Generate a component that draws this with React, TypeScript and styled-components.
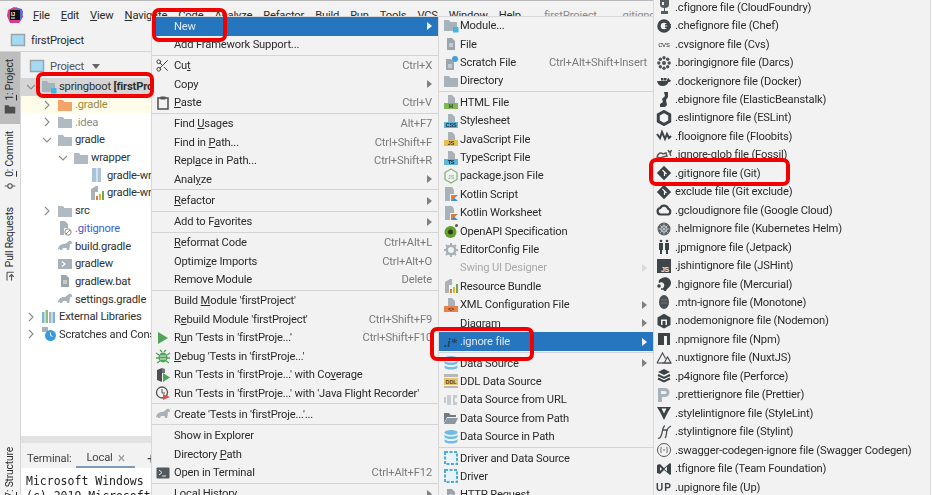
import React from "react";
import styled, { createGlobalStyle } from "styled-components";
import { Scissors } from "lucide-react";

const Global = createGlobalStyle`
  html, body { margin: 0; padding: 0; background: #fff; }
  #root { width: 933px; height: 495px; }
`;

const UI = `Roboto, "Noto Sans", sans-serif`;

const Root = styled.div`
  position: relative;
  width: 933px;
  height: 495px;
  overflow: hidden;
  background: #fff;
  font-family: ${UI};
  font-size: 11.2px;
  letter-spacing: -0.18px;
  color: #2b2b2b;
`;
const Frame = styled.div`
  position: relative;
  width: 930px;
  height: 495px;
  display: flex;
  flex-direction: column;
  background: #f2f2f2;
  border-top: 1px solid #b9b9b9;
  box-sizing: border-box;
  filter: blur(0.4px);
`;
const MenuBar = styled.div`
  height: 28px;
  flex: none;
  display: flex;
  align-items: center;
  padding-left: 7px;
  gap: 11px;
  white-space: nowrap;
`;
const BarItem = styled.span<{ $dim?: boolean }>`
  color: ${(p) => (p.$dim ? "#8a8a8a" : "#2b2b2b")};
  margin-left: ${(p) => (p.$dim ? "12px" : "0")};
`;
const NavBar = styled.div`
  height: 22px;
  flex: none;
  display: flex;
  align-items: center;
  gap: 5px;
  padding-left: 10px;
  border-bottom: 1px solid #d4d4d4;
`;
const Body = styled.div`
  flex: 1;
  min-height: 0;
  display: flex;
`;
const Stripe = styled.div`
  width: 20px;
  flex: none;
  display: flex;
  flex-direction: column;
  background: #f2f2f2;
  border-right: 1px solid #d4d4d4;
`;
const StripeTab = styled.div<{ $h: number; $on?: boolean }>`
  height: ${(p) => p.$h}px;
  flex: none;
  display: flex;
  flex-direction: column;
  align-items: center;
  justify-content: flex-start;
  gap: 3px;
  padding-top: 7px;
  box-sizing: border-box;
  background: ${(p) => (p.$on ? "#bdbdbd" : "transparent")};
  svg {
    width: 12px;
    height: 12px;
  }
`;
const StripeLabel = styled.span`
  writing-mode: vertical-rl;
  transform: rotate(180deg);
  font-size: 10.3px;
  line-height: 14px;
  white-space: nowrap;
`;
const StripeSpacer = styled.div`
  flex: 1;
`;
const Panel = styled.div`
  flex: 1;
  min-width: 0;
  display: flex;
  flex-direction: column;
`;
const PanelHead = styled.div`
  height: 26px;
  flex: none;
  display: flex;
  align-items: center;
  gap: 5px;
  padding: 2px 0 0 8px;
  box-sizing: border-box;
  color: #555;
`;
const Tree = styled.div`
  flex: 1;
  min-height: 0;
  background: #fff;
`;
const TreeRow = styled.div<{ $level: number; $tone?: string }>`
  height: 17.7px;
  display: flex;
  align-items: center;
  gap: 2px;
  padding-left: ${(p) => 4 + p.$level * 16}px;
  white-space: nowrap;
  background: ${(p) =>
    p.$tone === "sel" ? "#d5d5d5" : p.$tone === "ex" ? "#fffde9" : "transparent"};
`;
const ChevronSlot = styled.span`
  width: 12px;
  height: 12px;
  flex: none;
  margin-right: 2px;
`;
const TreeLabel = styled.span<{ $c?: string }>`
  color: ${(p) => p.$c || "#2f2f2f"};
`;
const Strong = styled.b`
  font-weight: 700;
`;
const HScroll = styled.div`
  height: 7px;
  flex: none;
  background: #e2e2e2;
`;
const TermHead = styled.div`
  height: 25px;
  flex: none;
  display: flex;
  align-items: stretch;
  padding-left: 6px;
  color: #444;
`;
const TermCell = styled.span`
  display: flex;
  align-items: center;
  padding-top: 6px;
`;
const TermTab = styled.div`
  margin-left: 5px;
  padding: 6px 10px 0;
  box-sizing: border-box;
  display: flex;
  align-items: center;
  gap: 5px;
  border-bottom: 2px solid #7f9ab8;
`;
const TermClose = styled.span`
  color: #9a9a9a;
  font-size: 14px;
`;
const TermPlus = styled(TermCell)`
  font-size: 15px;
  margin-left: 12px;
`;
const TermBody = styled.div`
  flex: none;
  height: 27px;
  background: #fff;
  padding: 6px 0 0 5px;
  box-sizing: border-box;
  font-family: "DejaVu Sans Mono", monospace;
  font-size: 11.5px;
  letter-spacing: 0;
  line-height: 15px;
  color: #222;
  white-space: nowrap;
`;
const Menu = styled.div<{ $x: number; $y: number; $w: number }>`
  position: absolute;
  left: ${(p) => p.$x}px;
  top: ${(p) => p.$y}px;
  width: ${(p) => p.$w}px;
  background: #f2f2f2;
  box-shadow: 0 0 0 1px #d8d8d8;
  white-space: nowrap;
`;
const Row = styled.div<{ $h: number; $on?: boolean; $off?: boolean; $ix: number }>`
  height: ${(p) => p.$h}px;
  display: flex;
  align-items: center;
  position: relative;
  padding-left: ${(p) => p.$ix}px;
  padding-right: 7px;
  background: ${(p) => (p.$on ? "#2675bf" : "transparent")};
  color: ${(p) => (p.$on ? "#dfeaf5" : p.$off ? "#a9a9a9" : "#2b2b2b")};
`;
const IconSlot = styled.span<{ $w: number }>`
  width: ${(p) => p.$w}px;
  flex: none;
  display: flex;
  align-items: center;
`;
const Label = styled.span`
  flex: 1;
`;
const Shortcut = styled.span`
  color: #7b7b7b;
`;
const Arrow = styled.span<{ $c: string }>`
  width: 0;
  height: 0;
  flex: none;
  border-left: 5px solid ${(p) => p.$c};
  border-top: 4px solid transparent;
  border-bottom: 4px solid transparent;
`;
const DropCaret = styled.span`
  width: 0;
  height: 0;
  flex: none;
  margin-left: 3px;
  border-left: 4px solid transparent;
  border-right: 4px solid transparent;
  border-top: 5px solid #666;
`;
const Sep = styled.div<{ $h: number }>`
  height: ${(p) => p.$h}px;
  display: flex;
  align-items: center;
  &::after {
    content: "";
    display: block;
    width: 100%;
    height: 1px;
    background: #d4d4d4;
  }
`;
const Mark = styled.div<{ $x: number; $y: number; $w: number; $h: number }>`
  position: absolute;
  left: ${(p) => p.$x}px;
  top: ${(p) => p.$y}px;
  width: ${(p) => p.$w}px;
  height: ${(p) => p.$h}px;
  border: 4px solid #f00000;
  border-radius: 7px;
  box-sizing: border-box;
`;
const Glyph = styled.svg`
  display: block;
  width: 16px;
  height: 16px;
  flex: none;
`;
const SmallGlyph = styled(Glyph)`
  width: 12px;
  height: 12px;
`;
const LogoWrap = styled.span`
  margin-right: -1px;
`;

type P = { children: React.ReactNode };
const G = ({ children }: P) => <Glyph viewBox="0 0 16 16">{children}</Glyph>;

const FolderG = ({ c = "#b0bac2" }: { c?: string }) => (
  <G><path d="M1 3h5l1.5 2H15v9H1z" fill={c} /></G>
);
const ModuleG = () => (
  <G>
    <path d="M1 2h5l1.5 2H14v9H1z" fill="#a6b3bd" />
    <rect x="10" y="9" width="5.5" height="5.5" fill="#40b6e0" />
  </G>
);
const DocG = ({ c = "#9aa5ad" }: { c?: string }) => (
  <G>
    <path d="M4 2h5l3 3v9H4z" fill={c} />
    <path d="M6 8h4M6 10h4" stroke="#eee" strokeWidth="1" />
  </G>
);
const ScratchG = () => (
  <G>
    <path d="M3 4h5l3 3v8H3z" fill="#9aa5ad" />
    <path d="M5 10h4M5 12h4" stroke="#eee" />
    <circle cx="12" cy="4" r="3" fill="#40a0e0" />
  </G>
);
const BandG = ({ c, t, f = "#fff" }: { c: string; t: string; f?: string }) => (
  <G>
    <path d="M5 1h4l3 3v5H5z" fill="#a9b2b9" />
    <rect x="1" y="9" width="14" height="6" fill={c} />
    <text x="8" y="14.2" textAnchor="middle" fontSize="5.5" fontWeight="700" fontFamily="Liberation Sans" fill={f}>{t}</text>
  </G>
);
const NodeG = () => (
  <G>
    <path d="M8 1l6 3.500v7L8 15l-6-3.500v-7z" fill="none" stroke="#80b47c" strokeWidth="1.300" />
    <text x="8" y="10.500" textAnchor="middle" fontSize="6" fontFamily="Liberation Sans" fill="#80a87c">JS</text>
  </G>
);
const KotlinG = () => (
  <G>
    <path d="M2 1h7l2 3v4H7v7H2z" fill="#a9b2b9" />
    <path d="M8 9h7l-3.500 3L15 15H8z" fill="#3a8fe0" />
    <path d="M8 9h6l-6 6z" fill="#f07a20" />
  </G>
);
const OpenApiG = () => (
  <G>
    <circle cx="7.500" cy="9" r="6" fill="#5fa02a" />
    <circle cx="7.500" cy="9" r="2.500" fill="#2f3a1f" />
    <circle cx="13.500" cy="2.500" r="1.500" fill="#555" />
  </G>
);
const GearG = () => (
  <G>
    <circle cx="8" cy="8" r="4.200" fill="none" stroke="#a5b0b8" strokeWidth="2.400" />
    <path d="M8 1v3M8 12v3M1 8h3M12 8h3M3 3l2 2M11 11l2 2M13 3l-2 2M5 11l-2 2" stroke="#a5b0b8" strokeWidth="2" />
  </G>
);
const BundleG = () => (
  <G>
    <path d="M2 4l5-3h2v6H6v8H2z" fill="#a9b2b9" />
    <rect x="7" y="11" width="2" height="4" fill="#e07a30" />
    <rect x="10" y="9" width="2" height="6" fill="#e8b030" />
    <rect x="13" y="6" width="2" height="9" fill="#6aaa50" />
  </G>
);
const XmlG = () => <BandG c="#e8824d" t="<>" f="#5a2a10" />;
const IgnoreG = () => (
  <G>
    <text x="1" y="13" fontFamily="Liberation Serif" fontStyle="italic" fontWeight="700" fontSize="13" fill="#24435e">.i*</text>
  </G>
);
const DbG = () => (
  <G>
    <ellipse cx="8" cy="3.500" rx="6.500" ry="2.500" fill="#6fbde6" />
    <path d="M1.500 5.500c1 2.800 12 2.800 13 0v2.500c-1 2.800-12 2.800-13 0z" fill="#6fbde6" />
    <path d="M1.500 10c1 2.800 12 2.800 13 0v2.500c-1 2.800-12 2.800-13 0z" fill="#6fbde6" />
  </G>
);
const DdlG = () => (
  <G>
    <rect x="1" y="1" width="14" height="3" fill="#b8b8b8" />
    <rect x="1" y="5" width="14" height="7" fill="#e8c46a" />
    <rect x="1" y="13" width="14" height="2" fill="#b8b8b8" />
    <text x="8" y="11" textAnchor="middle" fontSize="5.500" fontWeight="700" fontFamily="Liberation Sans" fill="#5a4310">DDL</text>
  </G>
);
const PlugG = () => (
  <G>
    <rect x="1" y="5" width="2" height="6" fill="#c5ccd1" />
    <rect x="4" y="3" width="4" height="10" fill="#c5ccd1" />
    <path d="M10 3h4v3h-2v4h2v3h-4z" fill="#c5ccd1" />
  </G>
);
const OpenFolderG = () => (
  <G>
    <path d="M1 3h5l1.500 2H13v2H4l-3 6z" fill="#6f7b84" />
    <path d="M4 8h11l-3 6H1z" fill="#8b969e" />
  </G>
);
const DriverG = () => (
  <G>
    <rect x="2" y="2" width="12" height="12" fill="#e7f3fb" stroke="#4fa9dc" strokeWidth="2" strokeDasharray="3 1.500" />
  </G>
);
const PasteG = () => (
  <G>
    <rect x="3" y="3" width="10" height="11" fill="none" stroke="#555" strokeWidth="1.600" />
    <rect x="5.500" y="1.500" width="5" height="3" fill="#555" />
  </G>
);
const PlayG = ({ c = "#4fa35b" }: { c?: string }) => (
  <G><path d="M3 2l10 6-10 6z" fill={c} /></G>
);
const BugG = () => (
  <G>
    <ellipse cx="8" cy="9.500" rx="4.500" ry="5" fill="#4fa35b" />
    <path d="M1 5l3 2M15 5l-3 2M1 10h3M12 10h3M2 15l3-2M14 15l-3-2M5 2l2 2M11 2L9 4" stroke="#4fa35b" strokeWidth="1.300" />
    <path d="M5 8h6M5 11h6" stroke="#e3f0e5" />
  </G>
);
const CoverG = () => (
  <G>
    <path d="M2 3l5-2v14l-5-2z" fill="#4c4f52" />
    <path d="M7 1l3 1v4H7z" fill="#6f767b" />
    <path d="M8 6l7 4.500L8 15z" fill="#4fa35b" />
  </G>
);
const ProfileG = () => (
  <G>
    <circle cx="7" cy="7.500" r="5.500" fill="none" stroke="#555" strokeWidth="1.300" />
    <path d="M7 4v4h3" fill="none" stroke="#555" />
    <path d="M8 9l7 3-7 3z" fill="#e2504c" />
  </G>
);
const TortoiseG = ({ c = "#a8b2ba" }: { c?: string }) => (
  <G>
    <path d="M1 12c0-4 3-6 6-6 2 0 3-2 5-3 2-.6 3 .6 3 2 0 1-1 1-2 1 0 2-.5 4-1 6h-2l-.5-2H6l-1 2H3l-.500-1.500L1 12z" fill={c} />
  </G>
);
const TermG = () => (
  <G>
    <rect x="1.500" y="2.500" width="13" height="11" rx="1" fill="#51595f" />
    <path d="M4 5l3 2.500L4 10M7 11h4" fill="none" stroke="#e8e8e8" />
  </G>
);
const Cf = () => (
  <G>
    <path d="M4 1h9v5c0 2-2 3-4 3v3h3v3H5v-3h3V9C6 9 4 8 4 6z" fill="#555c60" />
    <path d="M6 3h2v3H6z" fill="#f2f2f2" />
  </G>
);
const ChefG = () => (
  <G>
    <circle cx="8" cy="8" r="5" fill="none" stroke="#3f4548" strokeWidth="3.500" />
    <path d="M9 6h6v1.500H9zM9 8.500h6V10H9z" fill="#3f4548" />
  </G>
);
const CvsG = () => (
  <G>
    <text x="8" y="11" textAnchor="middle" fontFamily="Liberation Sans" fontSize="8" fill="#444">cvs</text>
  </G>
);
const DarcsG = () => (
  <G>
    {[0, 45, 90, 135, 180, 225, 270, 315].map((a) => (
      <circle key={a} cx={8 + 5.2 * Math.cos((a * Math.PI) / 180)} cy={8 + 5.2 * Math.sin((a * Math.PI) / 180)} r="1.700" fill="#4d5559" />
    ))}
    <circle cx="8" cy="8" r="2" fill="#4d5559" />
  </G>
);
const DockerG = () => (
  <G>
    <path d="M1 8h10c0-2 1-3 1.500-3 .5.500 1 1 1 2 .7 0 1.500.300 1.500.500-.500 1-1.500 1.500-2.500 1.500-1 2.500-3 4-6 4-3 0-5-2-5.500-5z" fill="#3c4347" />
    <rect x="5" y="5" width="2.500" height="2.500" fill="#3c4347" />
    <rect x="8" y="5" width="2.500" height="2.500" fill="#3c4347" />
  </G>
);
const EbG = () => (
  <G>
    <path d="M8 1h4v5l-2 3 1 5-2 2H4v-3l3-2-1-3 3-3z" fill="#3c4347" />
  </G>
);
const HexG = () => (
  <G>
    <path d="M8 1.500l5.700 3.200v6.600L8 14.500l-5.700-3.200V4.700z" fill="none" stroke="#3c4347" strokeWidth="3" />
  </G>
);
const FlooG = () => (
  <G>
    <path d="M1 6l3 4 2-6 3 7 2-5 2 4 2-2" fill="none" stroke="#3c4347" strokeWidth="2" />
  </G>
);
const FossilG = () => (
  <G>
    <path d="M1 10c1-4 4-5 6-3l3-1 1 3-4 1-3 1zM12 3l1 2 2-1-1 3 1 2" fill="none" stroke="#555" strokeWidth="1.400" />
  </G>
);
const GitG = () => (
  <G>
    <path d="M8 .8L15.200 8 8 15.200.8 8z" fill="#3c4347" />
    <path d="M6.500 5l2 2v4M8.500 7l2 2" stroke="#f2f2f2" strokeWidth="1.200" fill="none" />
  </G>
);
const CloudG = () => (
  <G>
    <path d="M4.500 12.500a3.300 3.300 0 0 1-.3-6.500 4.300 4.300 0 0 1 8 .8 3 3 0 0 1 0 5.700z" fill="none" stroke="#3c4347" strokeWidth="2.200" />
  </G>
);
const HelmG = () => (
  <G>
    <circle cx="8" cy="8" r="6.500" fill="#596166" />
    <circle cx="8" cy="8" r="3.200" fill="none" stroke="#c9ced1" strokeWidth="1" />
    <path d="M8 2.500v11M2.500 8h11M4 4l8 8M12 4l-8 8" stroke="#c9ced1" strokeWidth=".7" />
  </G>
);
const JetpackG = () => (
  <G>
    <path d="M3 4h4v7H6v4H4v-4H3zM9 4h4v7h-1v4h-2v-4H9z" fill="#3c4347" />
    <circle cx="5" cy="2" r="1.300" fill="#3c4347" />
    <circle cx="11" cy="2" r="1.300" fill="#3c4347" />
  </G>
);
const JsG = () => (
  <G>
    <rect x="1" y="1" width="14" height="14" fill="#3f4548" />
    <text x="9" y="13.500" textAnchor="middle" fontFamily="Liberation Sans" fontWeight="700" fontSize="7" fill="#eee">JS</text>
  </G>
);
const HgG = () => (
  <G>
    <path d="M6 2c5-2 9 1 9 5 0 4-4 5-5 8-2 .5-3-1-3-2 0-2 2-2 1-5-1-2-3-2-5-1-1-3 1-4 3-5z" fill="#3c4347" />
    <circle cx="3" cy="10" r="1.800" fill="#3c4347" />
    <circle cx="6" cy="13" r="1" fill="#3c4347" />
  </G>
);
const MtnG = () => (
  <G>
    <ellipse cx="8" cy="8" rx="5" ry="7" fill="#4a5054" />
    <path d="M5 6h6M5 9h6" stroke="#70777b" />
  </G>
);
const NodemonG = () => (
  <G>
    <path d="M8 .8l6.500 3.700v7.500L8 15.500 1.500 12V4.500z" fill="#3c4347" />
    <path d="M5 12V6.500h6V12H9.500V8h-3v4z" fill="#f2f2f2" />
  </G>
);
const NpmG = () => (
  <G>
    <path d="M2 2h12v12h-3V5H8v9H2z" fill="#3c4347" />
  </G>
);
const NuxtG = () => (
  <G>
    <path d="M1 13L6.500 3l3 5.500M6 13h9l-3.500-6-3 5.500" fill="none" stroke="#4c5357" strokeWidth="1.200" />
    <path d="M1 13h14" stroke="#4c5357" strokeWidth="1.200" />
  </G>
);
const P4G = () => (
  <G>
    <path d="M8 1l6 3-6 3-6-3z" fill="#3c4347" />
    <path d="M2 7l6 3 6-3M2 10.500l6 3 6-3" fill="none" stroke="#3c4347" strokeWidth="2" />
  </G>
);
const PrettierG = () => (
  <G>
    <path d="M2 1h7a4.500 4.500 0 0 1 0 9H6v5H2z" fill="#a9b2b9" />
    <path d="M5 4h4a1.500 1.500 0 0 1 0 3H5z" fill="#f2f2f2" />
  </G>
);
const StyleLintG = () => (
  <G>
    <path d="M1 2h14l-3 5-4 8-4-8z" fill="#3c4347" />
    <path d="M5.500 3.500h5L8 8.500z" fill="#f2f2f2" />
  </G>
);
const StylintG = () => (
  <G>
    <path d="M2 14c2 1 3-1 4-5s1-7 3-7M9 14c2-2 1-5 2-8 .5-1.500 2-3 4-4M6 6h6" fill="none" stroke="#4c5357" strokeWidth="1.300" />
  </G>
);
const SwaggerG = () => (
  <G>
    <circle cx="8" cy="8" r="6.500" fill="none" stroke="#555" strokeWidth="1" />
    <path d="M5.500 5c-1 1 0 2-1 3 1 1 0 2 1 3M10.500 5c1 1 0 2 1 3-1 1 0 2-1 3M7 8h2" fill="none" stroke="#555" strokeWidth=".9" />
  </G>
);
const TfsG = () => (
  <G>
    <path d="M1 4l3-1 4 4 6-5 1 1v10l-1 1-6-5-4 4-3-1zM4 6v4l2-2zM11 5.500L8.500 8l2.500 2.500z" fill="#3c4347" fillRule="evenodd" />
  </G>
);
const UpG = () => (
  <G>
    <text x="8" y="12" textAnchor="middle" fontFamily="Liberation Sans" fontWeight="700" fontSize="10" letterSpacing="1" fill="#3c4347">UP</text>
  </G>
);
const LogoG = () => (
  <G>
    <path d="M1 3l6-3 8 2 1 8-4 6H3L0 9z" fill="#d93a8c" />
    <path d="M9 0l7 4-2 10z" fill="#3a78e0" />
    <rect x="3" y="3" width="10" height="10" fill="#111" />
    <text x="4" y="8.500" fontFamily="Liberation Sans" fontWeight="700" fontSize="5" fill="#fff">IJ</text>
    <rect x="4" y="10.500" width="4" height="1" fill="#fff" />
  </G>
);
const ChevR = () => (
  <SmallGlyph viewBox="0 0 12 12">
    <path d="M4 2l4 4-4 4" fill="none" stroke="#8b8b8b" strokeWidth="1.100" />
  </SmallGlyph>
);
const ChevD = () => (
  <SmallGlyph viewBox="0 0 12 12">
    <path d="M2 4l4 4 4-4" fill="none" stroke="#8b8b8b" strokeWidth="1.100" />
  </SmallGlyph>
);
const WrapperDocG = () => (
  <G>
    <path d="M3 1h9v14H3z" fill="#a9c4d8" />
    <path d="M7 1h2v14H7z" fill="#d5e2ec" />
  </G>
);
const GitignoreG = () => (
  <G>
    <path d="M3 1h5l3 3v4H7v7H3z" fill="#a9b2b9" />
    <circle cx="11" cy="12" r="3.200" fill="none" stroke="#8b8b8b" />
    <path d="M9 14l4-4" stroke="#8b8b8b" />
  </G>
);
const ShellG = () => (
  <G>
    <rect x="1" y="3" width="14" height="10" fill="#a8b2ba" />
    <path d="M5 5.500L8 8l-3 2.500" fill="none" stroke="#fff" strokeWidth="1.200" />
  </G>
);
const LibG = () => (
  <G>
    <rect x="1" y="3" width="2.500" height="11" fill="#7cb5d8" />
    <rect x="4.500" y="1" width="2.500" height="13" fill="#8fbf76" />
    <rect x="8" y="3" width="2.500" height="11" fill="#a8b2ba" />
    <rect x="11.500" y="3" width="2.500" height="11" fill="#7cb5d8" />
  </G>
);
const ScratchFolderG = () => (
  <G>
    <path d="M1 1h6v5H1z" fill="#a9b2b9" />
    <circle cx="9.500" cy="9.500" r="5.500" fill="#3a9bdc" />
    <path d="M9.500 6.500v3l2 1" fill="none" stroke="#fff" />
  </G>
);
const ProjectG = () => (
  <G>
    <rect x="1.500" y="2.500" width="13" height="11" fill="#a3dcf2" stroke="#9aa5ad" strokeWidth="1.500" />
  </G>
);

const Mn = styled.u`
  text-underline-offset: 1px;
`;
/** "&" marks the mnemonic letter */
const Text = ({ s }: { s: string }) => {
  const i = s.indexOf("&");
  if (i < 0) return <>{s}</>;
  return (
    <>
      {s.slice(0, i)}
      <Mn>{s[i + 1]}</Mn>
      {s.slice(i + 2)}
    </>
  );
};

type Item = {
  t?: string;
  i?: React.ReactNode;
  k?: string;
  a?: boolean;
  on?: boolean;
  off?: boolean;
  sep?: boolean;
};

const MenuList = ({ items, h, s, ix, iw }: { items: Item[]; h: number; s: number; ix: number; iw: number }) => (
  <>
    {items.map((m, n) =>
      m.sep ? (
        <Sep key={n} $h={s} />
      ) : (
        <Row key={n} $h={h} $ix={ix} $on={m.on} $off={m.off}>
          <IconSlot $w={iw}>{m.i}</IconSlot>
          <Label><Text s={m.t || ""} /></Label>
          {m.k && <Shortcut>{m.k}</Shortcut>}
          {m.a && <Arrow $c={m.on ? "#f4f8fc" : m.off ? "#d8d8d8" : "#808080"} />}
        </Row>
      )
    )}
  </>
);

const menuA: Item[] = [
  { t: "New", on: true, a: true },
  { t: "Add Framework Support..." },
  { sep: true },
  { t: "Cu&t", i: <Scissors size={15} color="#4a4a4a" strokeWidth={1.600} />, k: "Ctrl+X" },
  { t: "Copy", a: true },
  { t: "&Paste", i: <PasteG />, k: "Ctrl+V" },
  { sep: true },
  { t: "Find &Usages", k: "Alt+F7" },
  { t: "Find in &Path...", k: "Ctrl+Shift+F" },
  { t: "Repl&ace in Path...", k: "Ctrl+Shift+R" },
  { t: "Anal&yze", a: true },
  { sep: true },
  { t: "&Refactor", a: true },
  { sep: true },
  { t: "Add to F&avorites", a: true },
  { sep: true },
  { t: "&Reformat Code", k: "Ctrl+Alt+L" },
  { t: "Optimi&ze Imports", k: "Ctrl+Alt+O" },
  { t: "Remove Module", k: "Delete" },
  { sep: true },
  { t: "Build &Module 'firstProject'" },
  { t: "R&ebuild Module 'firstProject'", k: "Ctrl+Shift+F9" },
  { t: "R&un 'Tests in 'firstProje...'", i: <PlayG />, k: "Ctrl+Shift+F10" },
  { t: "&Debug 'Tests in 'firstProje...'", i: <BugG /> },
  { t: "Run 'Tests in 'firstProje...' with Co&verage", i: <CoverG /> },
  { t: "Run 'Tests in 'firstProje...' with 'Java Flight Recorder'", i: <ProfileG /> },
  { sep: true },
  { t: "Create 'Tests in 'firstProje...'...", i: <TortoiseG /> },
  { sep: true },
  { t: "Show in Explorer" },
  { t: "Directory &Path" },
  { t: "Open in Terminal", i: <TermG />, k: "Ctrl+Alt+F12" },
  { sep: true },
  { t: "Local History", a: true },
];

const menuB: Item[] = [
  { t: "Module...", i: <ModuleG /> },
  { t: "File", i: <DocG /> },
  { t: "Scratch File", i: <ScratchG />, k: "Ctrl+Alt+Shift+Insert" },
  { t: "Directory", i: <FolderG c="#a9b2b9" /> },
  { sep: true },
  { t: "HTML File", i: <BandG c="#7fb850" t="H" f="#234" /> },
  { t: "Stylesheet", i: <BandG c="#5fb6d8" t="CSS" f="#123" /> },
  { t: "JavaScript File", i: <BandG c="#e8c050" t="JS" f="#432" /> },
  { t: "TypeScript File", i: <BandG c="#5fb6d8" t="TS" f="#123" /> },
  { t: "package.json File", i: <NodeG /> },
  { t: "Kotlin Script", i: <KotlinG /> },
  { t: "Kotlin Worksheet", i: <KotlinG /> },
  { t: "OpenAPI Specification", i: <OpenApiG /> },
  { t: "EditorConfig File", i: <GearG /> },
  { t: "Swing UI Designer", off: true, a: true },
  { t: "Resource Bundle", i: <BundleG /> },
  { t: "XML Configuration File", i: <XmlG />, a: true },
  { t: "Diagram", a: true },
  { t: ".ignore file", i: <IgnoreG />, on: true, a: true },
  { sep: true },
  { t: "Data Source", i: <DbG />, a: true },
  { t: "DDL Data Source", i: <DdlG /> },
  { t: "Data Source from URL", i: <PlugG /> },
  { t: "Data Source from Path", i: <OpenFolderG /> },
  { t: "Data Source in Path", i: <DbG /> },
  { sep: true },
  { t: "Driver and Data Source", i: <DriverG /> },
  { t: "Driver", i: <DriverG /> },
  { t: "HTTP Request", i: <DocG /> },
];

const menuC: Item[] = [
  { t: ".cfignore file (CloudFoundry)", i: <Cf /> },
  { t: ".chefignore file (Chef)", i: <ChefG /> },
  { t: ".cvsignore file (Cvs)", i: <CvsG /> },
  { t: ".boringignore file (Darcs)", i: <DarcsG /> },
  { t: ".dockerignore file (Docker)", i: <DockerG /> },
  { t: ".ebignore file (ElasticBeanstalk)", i: <EbG /> },
  { t: ".eslintignore file (ESLint)", i: <HexG /> },
  { t: ".flooignore file (Floobits)", i: <FlooG /> },
  { t: ".ignore-glob file (Fossil)", i: <FossilG /> },
  { t: ".gitignore file (Git)", i: <GitG /> },
  { t: "exclude file (Git exclude)", i: <GitG /> },
  { t: ".gcloudignore file (Google Cloud)", i: <CloudG /> },
  { t: ".helmignore file (Kubernetes Helm)", i: <HelmG /> },
  { t: ".jpmignore file (Jetpack)", i: <JetpackG /> },
  { t: ".jshintignore file (JSHint)", i: <JsG /> },
  { t: ".hgignore file (Mercurial)", i: <HgG /> },
  { t: ".mtn-ignore file (Monotone)", i: <MtnG /> },
  { t: ".nodemonignore file (Nodemon)", i: <NodemonG /> },
  { t: ".npmignore file (Npm)", i: <NpmG /> },
  { t: ".nuxtignore file (NuxtJS)", i: <NuxtG /> },
  { t: ".p4ignore file (Perforce)", i: <P4G /> },
  { t: ".prettierignore file (Prettier)", i: <PrettierG /> },
  { t: ".stylelintignore file (StyleLint)", i: <StyleLintG /> },
  { t: ".stylintignore file (Stylint)", i: <StylintG /> },
  { t: ".swagger-codegen-ignore file (Swagger Codegen)", i: <SwaggerG /> },
  { t: ".tfignore file (Team Foundation)", i: <TfsG /> },
  { t: ".upignore file (Up)", i: <UpG /> },
];

type Node = { l: number; c?: "r" | "d"; i?: React.ReactNode; t: React.ReactNode; color?: string; tone?: string };
const tree: Node[] = [
  { l: 0, c: "d", i: <ModuleG />, t: <>springboot <Strong>[firstProject]</Strong></>, tone: "sel" },
  { l: 1, c: "r", i: <FolderG c="#f2a46a" />, t: ".gradle", color: "#9a8a40", tone: "ex" },
  { l: 1, c: "r", i: <FolderG />, t: ".idea", color: "#8a8a8a" },
  { l: 1, c: "d", i: <FolderG />, t: "gradle" },
  { l: 2, c: "d", i: <FolderG />, t: "wrapper" },
  { l: 3, i: <WrapperDocG />, t: "gradle-wrapper.jar" },
  { l: 3, i: <BundleG />, t: "gradle-wrapper.properties" },
  { l: 1, c: "r", i: <FolderG />, t: "src" },
  { l: 1, i: <GitignoreG />, t: ".gitignore", color: "#3a5fcd" },
  { l: 1, i: <TortoiseG />, t: "build.gradle" },
  { l: 1, i: <ShellG />, t: "gradlew" },
  { l: 1, i: <DocG />, t: "gradlew.bat" },
  { l: 1, i: <TortoiseG />, t: "settings.gradle" },
  { l: 0, c: "r", i: <LibG />, t: "External Libraries" },
  { l: 0, c: "r", i: <ScratchFolderG />, t: "Scratches and Consoles" },
];

export default function App() {
  return (
    <Root>
      <Global />
      <Frame>
        <MenuBar>
          <LogoWrap><LogoG /></LogoWrap>
          <BarItem><Text s="&File" /></BarItem>
          <BarItem><Text s="&Edit" /></BarItem>
          <BarItem><Text s="&View" /></BarItem>
          <BarItem><Text s="&Navigate" /></BarItem>
          <BarItem><Text s="&Code" /></BarItem>
          <BarItem><Text s="Analy&ze" /></BarItem>
          <BarItem><Text s="&Refactor" /></BarItem>
          <BarItem><Text s="&Build" /></BarItem>
          <BarItem><Text s="R&un" /></BarItem>
          <BarItem><Text s="&Tools" /></BarItem>
          <BarItem><Text s="VC&S" /></BarItem>
          <BarItem><Text s="&Window" /></BarItem>
          <BarItem><Text s="&Help" /></BarItem>
          <BarItem $dim>firstProject</BarItem>
          <BarItem $dim>.gitignore</BarItem>
        </MenuBar>
        <NavBar>
          <ProjectG />
          <span>firstProject</span>
        </NavBar>
        <Body>
          <Stripe>
            <StripeTab $h={72} $on>
              <StripeLabel><Text s="&1: Project" /></StripeLabel>
              <FolderG c="#4d4d4d" />
            </StripeTab>
            <StripeTab $h={76}>
              <StripeLabel><Text s="&0: Commit" /></StripeLabel>
              <Glyph viewBox="0 0 16 16">
                <circle cx="8" cy="8" r="3" fill="none" stroke="#555" strokeWidth="1.500" />
                <path d="M1 8h4M11 8h4" stroke="#555" strokeWidth="1.500" />
              </Glyph>
            </StripeTab>
            <StripeTab $h={90}>
              <StripeLabel>Pull Requests</StripeLabel>
              <Glyph viewBox="0 0 16 16">
                <path d="M4 3h9M4 3v11M10 14V6M7 9l3-3 3 3" fill="none" stroke="#555" strokeWidth="1.500" />
              </Glyph>
            </StripeTab>
            <StripeSpacer />
            <StripeTab $h={55}>
              <StripeLabel><Text s="&7: Structure" /></StripeLabel>
            </StripeTab>
          </Stripe>
          <Panel>
            <PanelHead>
              <ProjectG />
              <span>Project</span>
              <DropCaret />
            </PanelHead>
            <Tree>
              {tree.map((n, i) => (
                <TreeRow key={i} $level={n.l} $tone={n.tone}>
                  <ChevronSlot>{n.c === "r" ? <ChevR /> : n.c === "d" ? <ChevD /> : null}</ChevronSlot>
                  {n.i}
                  <TreeLabel $c={n.color}>{n.t}</TreeLabel>
                </TreeRow>
              ))}
            </Tree>
            <HScroll />
            <TermHead>
              <TermCell>Terminal:</TermCell>
              <TermTab>Local <TermClose>×</TermClose></TermTab>
              <TermPlus>+</TermPlus>
            </TermHead>
            <TermBody>
              Microsoft Windows
              <br />
              (c) 2019 Microsoft
            </TermBody>
          </Panel>
        </Body>
        <Menu $x={152} $y={16} $w={287}>
          <MenuList items={menuA} h={18.5} s={2.6} ix={3} iw={19} />
        </Menu>
        <Menu $x={439} $y={15.5} $w={215}>
          <MenuList items={menuB} h={18.42} s={3} ix={4} iw={17} />
        </Menu>
        <Menu $x={654} $y={-3} $w={276}>
          <MenuList items={menuC} h={18.46} s={0} ix={2} iw={19} />
        </Menu>
      </Frame>
      <Mark $x={152} $y={8} $w={75} $h={34} />
      <Mark $x={36} $y={72} $w={118} $h={26} />
      <Mark $x={430} $y={327} $w={104} $h={34} />
      <Mark $x={649} $y={158} $w={141} $h={28} />
    </Root>
  );
}
